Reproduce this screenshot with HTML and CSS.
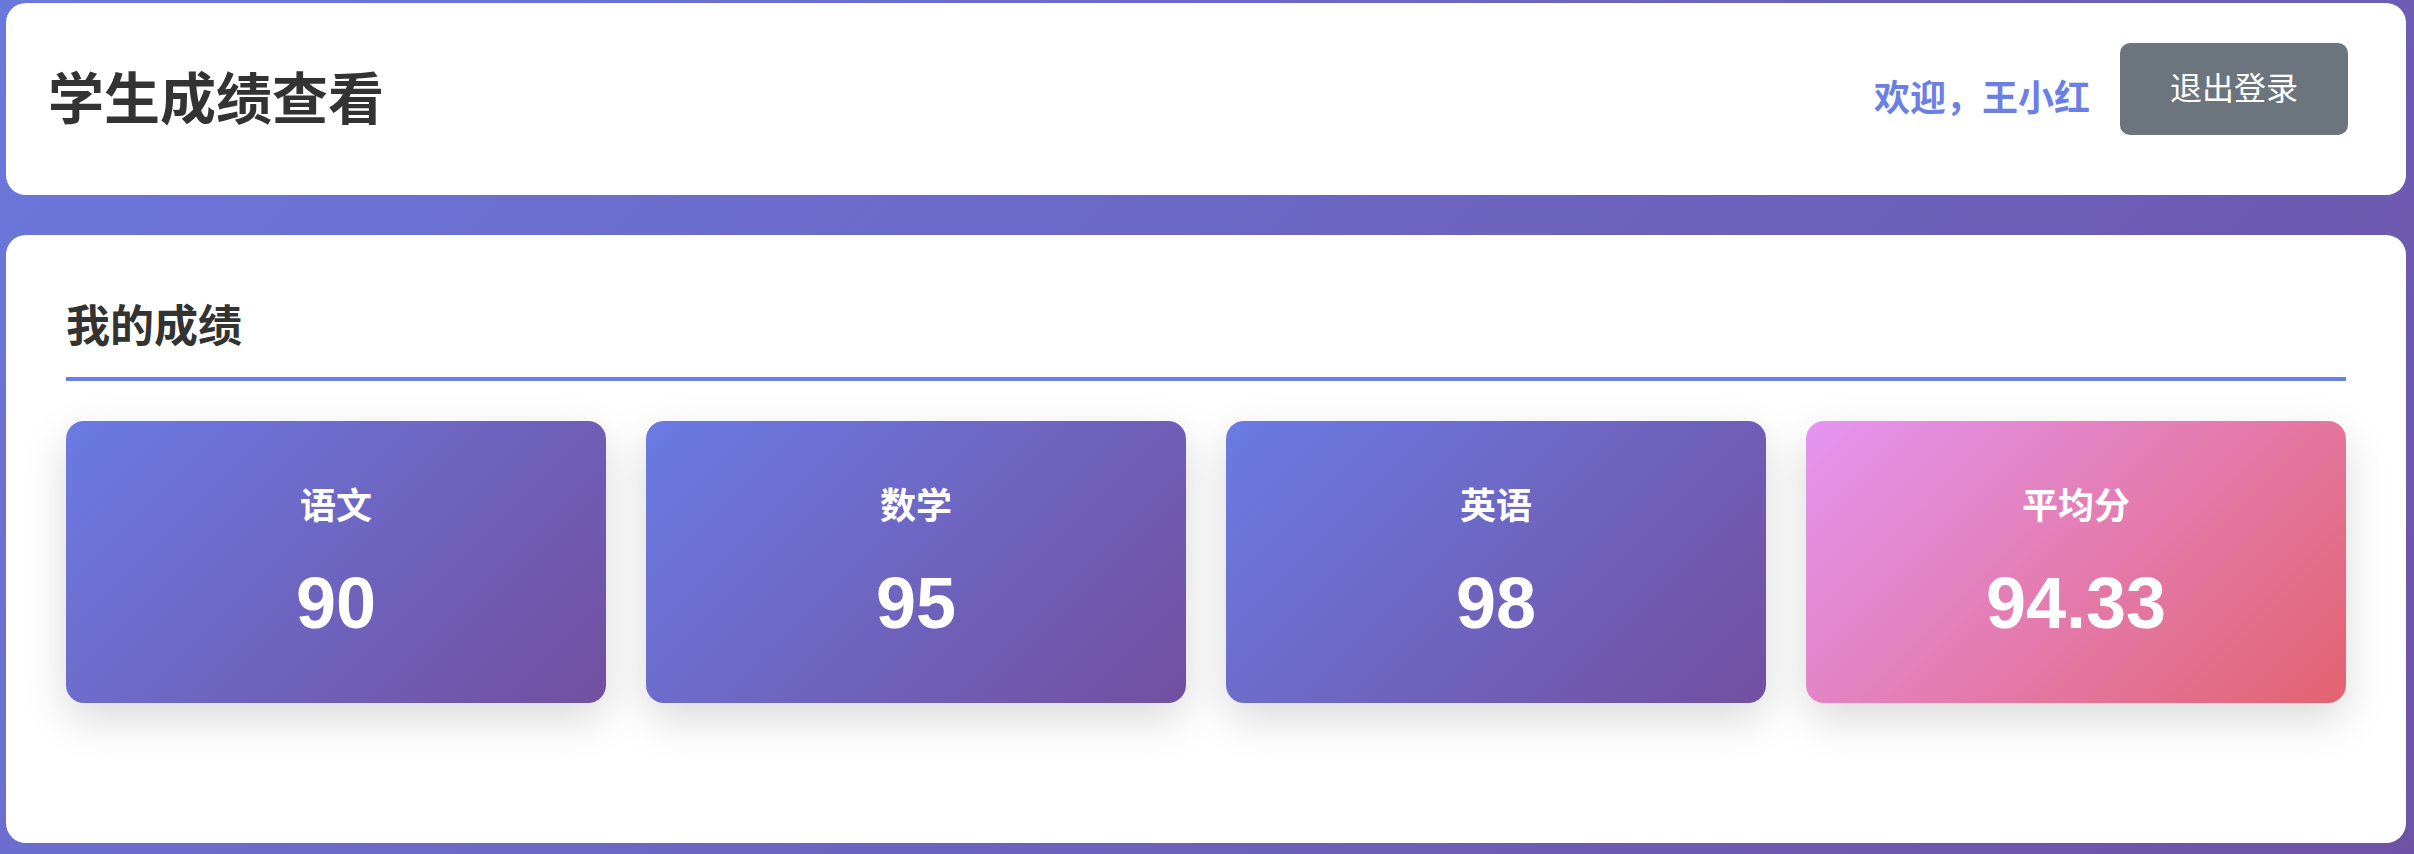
FILE: index.html
```html
<!DOCTYPE html>
<html lang="zh-CN">
<head>
<meta charset="UTF-8">
<title>学生成绩查看</title>
<link rel="stylesheet" href="styles.css">
</head>
<body>
<div class="container">
  <header class="header">
    <h1 class="title">学生成绩查看</h1>
    <div class="user-info">
      <span class="welcome">欢迎，王小红</span>
      <button class="logout">退出登录</button>
    </div>
  </header>
  <main class="panel">
    <h2 class="panel-title">我的成绩</h2>
    <div class="scores">
      <div class="score-card">
        <div class="subject">语文</div>
        <div class="score">90</div>
      </div>
      <div class="score-card">
        <div class="subject">数学</div>
        <div class="score">95</div>
      </div>
      <div class="score-card">
        <div class="subject">英语</div>
        <div class="score">98</div>
      </div>
      <div class="score-card average">
        <div class="subject">平均分</div>
        <div class="score">94.33</div>
      </div>
    </div>
  </main>
</div>
</body>
</html>
```
FILE: styles.css
```css
* {
  box-sizing: border-box;
}

html, body {
  margin: 0;
  padding: 0;
}

body {
  min-height: 854px;
  background: linear-gradient(135deg, #6a78dc 0%, #6e52a6 100%);
  font-family: "Liberation Sans", "Noto Sans CJK SC", sans-serif;
  color: #333;
}

.container {
  width: 2400px;
  margin-left: 6px;
  padding-top: 3px;
  padding-bottom: 10px;
}

.header {
  background: #fff;
  border-radius: 20px;
  padding: 40px 58px 40px 42px;
  display: flex;
  align-items: center;
  justify-content: space-between;
}

.title {
  margin: 0;
  font-size: 56px;
  line-height: 81px;
  font-weight: 700;
  color: #333;
}

.user-info {
  display: flex;
  align-items: center;
}

.welcome {
  font-size: 36px;
  line-height: 52px;
  font-weight: 700;
  color: #6b7fe6;
  margin-right: 30px;
}

.logout {
  margin: 0 0 20px 0;
  border: none;
  border-radius: 10px;
  background: #6c757d;
  color: #fff;
  font-family: "Liberation Sans", "Noto Sans CJK SC", sans-serif;
  font-size: 32px;
  line-height: 46px;
  padding: 23px 50px;
}

.panel {
  display: block;
  margin-top: 40px;
  background: #fff;
  border-radius: 20px;
  padding: 60px 60px 100px;
  min-height: 608px;
}

.panel-title {
  margin: 0;
  font-size: 44px;
  line-height: 64px;
  font-weight: 700;
  color: #333;
  padding-bottom: 18px;
  border-bottom: 4px solid #6b7fe6;
}

.scores {
  margin-top: 40px;
  display: grid;
  grid-template-columns: repeat(4, 1fr);
  gap: 40px;
}

.score-card {
  background: linear-gradient(135deg, #6a7be2 0%, #724fa0 100%);
  border-radius: 18px;
  padding: 60px 20px;
  text-align: center;
  color: #fff;
  box-shadow: 0 16px 44px rgba(0, 0, 0, 0.15);
}

.score-card.average {
  background: linear-gradient(135deg, #e495f2 0%, #e3636f 100%);
}

.subject {
  font-size: 36px;
  line-height: 52px;
  font-weight: 700;
}

.score {
  margin-top: 30px;
  font-size: 72px;
  line-height: 80px;
  font-weight: 700;
}
```
